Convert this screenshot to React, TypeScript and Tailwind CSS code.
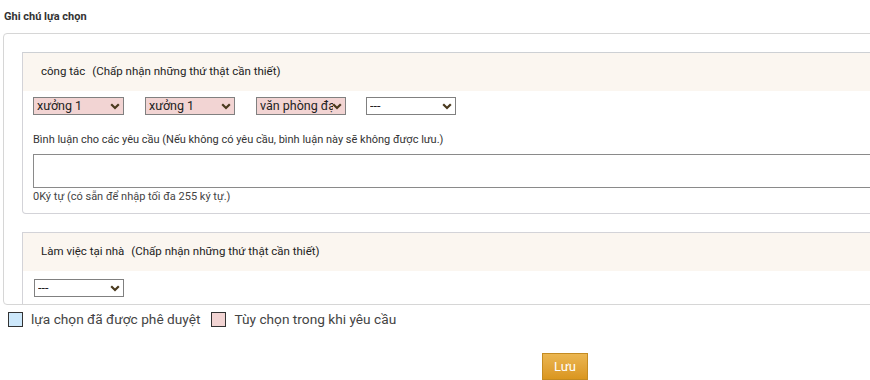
const font = { fontFamily: 'Roboto, "Noto Sans", sans-serif' };

function Chevron() {
  return (
    <svg width="10" height="7" viewBox="0 0 10 7" className="pointer-events-none absolute right-[4px] top-[6px]">
      <path d="M1.2 1.2 L5 5 L8.8 1.2" fill="none" stroke="#4a3a1e" strokeWidth="2.2" />
    </svg>
  );
}

function Pick({ value, width, pink }: { value: string; width: string; pink?: boolean }) {
  return (
    <div className={`relative h-[18px] ${width}`}>
      <select
        defaultValue={value}
        className={`block h-[18px] w-full appearance-none border border-[#808080] py-0 pl-[3px] pr-[12px] text-[12.5px] leading-[16px] text-[#222] outline-none ${pink ? 'bg-[#f2d4d3]' : 'bg-white'}`}
      >
        <option>{value}</option>
      </select>
      <Chevron />
    </div>
  );
}

function CardHead({ title }: { title: string }) {
  return (
    <div className="flex h-[38px] items-center bg-[#fbf6f0] pl-[18px] text-[11.5px] text-[#222]">
      {title}
      <span className="ml-[7px]">(Chấp nhận những thứ thật cần thiết)</span>
    </div>
  );
}

export default function App() {
  return (
    <div className="h-[380px] w-[870px] overflow-hidden bg-white text-[#333]" style={font}>
      <div className="pl-1 pt-[10px] text-[11px] font-bold leading-[14px]">Ghi chú lựa chọn</div>

      <div className="ml-[3px] mt-[9px] w-[900px] rounded-l-[4px] border border-[#d6d6d6] pl-[18px] pt-[18px]">
        <div className="rounded-bl-[4px] border border-[#d3d3d8] border-t-[#cdd0d4]">
          <CardHead title="công tác" />
          <div className="px-[10px] pb-[9px] pt-[6px]">
            <div className="flex gap-[21px]">
              <Pick value="xưởng 1" width="w-[91px]" pink />
              <Pick value="xưởng 1" width="w-[90px]" pink />
              <Pick value="văn phòng đại diện" width="w-[90px]" pink />
              <div className="-ml-[1px]">
                <Pick value="---" width="w-[90px]" />
              </div>
            </div>
            <div className="mt-[18px] text-[11px] leading-[14px] text-[#333]">
              Bình luận cho các yêu cầu (Nếu không có yêu cầu, bình luận này sẽ không được lưu.)
            </div>
            <textarea className="mt-[7px] block h-[34px] w-full resize-none border border-[#8a8a8a] outline-none" />
            <div className="mt-[2px] text-[11px] leading-[14px] text-[#444]">
              0Ký tự (có sẵn để nhập tối đa 255 ký tự.)
            </div>
          </div>
        </div>

        <div className="mt-[18px] border border-b-0 border-[#d3d3d8]">
          <CardHead title="Làm việc tại nhà" />
          <div className="px-[11px] pb-[7px] pt-[8px]">
            <Pick value="---" width="w-[90px]" />
          </div>
        </div>
      </div>

      <div className="mt-[6px] flex items-center pl-2 text-[13.7px] leading-[16px] text-[#444]">
        <span className="h-[15px] w-[15px] border border-[#333] bg-[#cde8fb]" />
        <span className="ml-2">lựa chọn đã được phê duyệt</span>
        <span className="ml-[11px] h-[15px] w-[15px] border border-[#333] bg-[#f2d4d3]" />
        <span className="ml-2">Tùy chọn trong khi yêu cầu</span>
      </div>

      <div className="mt-[26px] pl-[542px]">
        <button className="h-[27px] w-[46px] border border-[#c48b22] bg-gradient-to-b from-[#ebb650] to-[#da961e] text-[13px] text-white">
          Lưu
        </button>
      </div>
    </div>
  );
}
